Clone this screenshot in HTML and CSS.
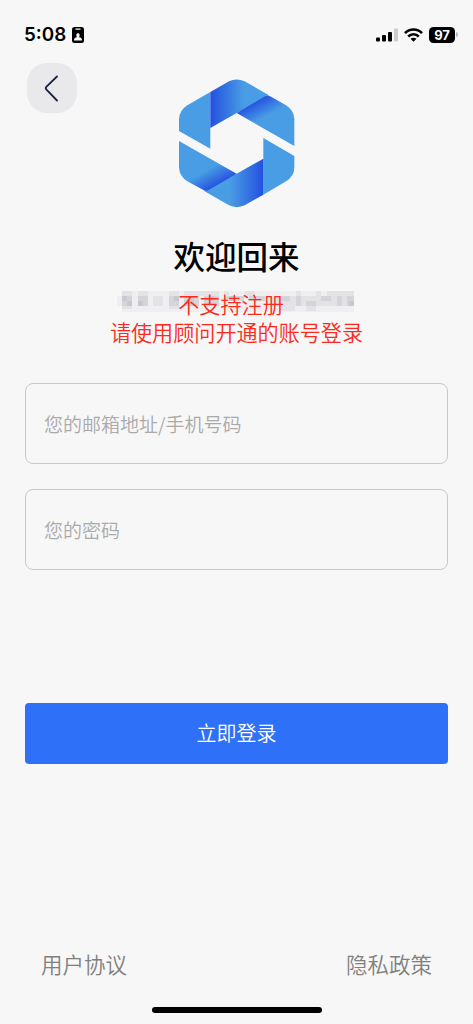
FILE: index.html
```html
<!DOCTYPE html>
<html lang="zh-CN">
<head>
<meta charset="utf-8">
<meta name="viewport" content="width=device-width">
<title>登录</title>
<link rel="stylesheet" href="styles.css">
</head>
<body>
<main class="screen">
  <header class="status">
    <div class="clock"><span>5:08</span>
      <svg class="badge" width="12" height="16" viewBox="0 0 12 16"><rect width="12" height="16" rx="2.5"/><path fill="#f7f7f7" d="M3.5 1.500h5v1.200h-5zM2 13.500c0-2.200 1.400-3 2.800-3.200V9.600C4 9 4 6.300 6 6.300s2 2.700 1.200 3.300v.7c1.400.2 2.800 1 2.800 3.200z"/></svg>
    </div>
    <div class="indicators">
      <svg width="22" height="14" viewBox="0 0 22 14"><rect x="0" y="9.500" width="4" height="4" rx="1"/><rect x="6" y="7" width="4" height="6.500" rx="1"/><rect x="12" y="4" width="4" height="9.500" rx="1"/><rect x="18" y="0.500" width="4" height="13" rx="1" fill="#ccc"/></svg>
      <svg width="19" height="14" viewBox="0 0 19 14"><g fill="none" stroke="#000" stroke-width="2.600"><path d="M1 5.200C5.700.300 13.300.300 18 5.200"/><path d="M4.200 8.500c3-3.100 7.600-3.100 10.600 0"/></g><path d="M6.500 10.800c1.700-1.500 4.300-1.500 6 0l-3 3z"/></svg>
      <div class="battery"><span>97</span></div>
    </div>
  </header>
  <button class="back" aria-label="返回"><svg width="50" height="50" viewBox="0 0 50 50"><path d="M30 13.500 19.500 23.700Q18 25.200 19.500 26.700L30 37.500" fill="none" stroke="#1b2138" stroke-width="1.800" stroke-linecap="round"/></svg></button>
  <svg class="logo" width="116" height="129" viewBox="42 28 348 387">
    <defs>
      <linearGradient id="top" gradientUnits="userSpaceOnUse" x1="136" y1="0" x2="236" y2="0"><stop stop-color="#2450e0"/><stop offset="1" stop-color="#489de4"/></linearGradient>
      <linearGradient id="right" gradientUnits="userSpaceOnUse" x1="262" y1="98" x2="290" y2="148"><stop stop-color="#2450e0"/><stop offset="1" stop-color="#489de4"/></linearGradient>
      <linearGradient id="bottom" gradientUnits="userSpaceOnUse" x1="295" y1="0" x2="195" y2="0"><stop stop-color="#2450e0"/><stop offset="1" stop-color="#489de4"/></linearGradient>
      <linearGradient id="left" gradientUnits="userSpaceOnUse" x1="168" y1="343" x2="140" y2="293"><stop stop-color="#2450e0"/><stop offset="1" stop-color="#489de4"/></linearGradient>
    </defs>
    <path fill="#489de4" d="M136 67V237L42 184V149Q43 122 67 107z"/>
    <path fill="url(#top)" d="M136 67 192 35Q215 24 239 35L312 77 215 130 136 175z"/>
    <path fill="url(#right)" d="M215 130 298 81Q307 76 318 81L363 107Q387 122 388 149V229z"/>
    <path fill="#489de4" d="M295 375V205L388 259V293Q388 320 363 335z"/>
    <path fill="url(#bottom)" d="M295 375 239 407Q215 418 192 407L116 363 215 312 295 267z"/>
    <path fill="url(#left)" d="M215 312 132 360Q124 365 114 360L67 335Q43 320 42 293V214z"/>
  </svg>
  <h1>欢迎回来</h1>
  <div class="notice">
    <svg class="mosaic" width="240" height="21" viewBox="0 0 240 21" shape-rendering="crispEdges">
      <path fill="#efeff1" d="M0 5h5v10H0zM5 0h232v21H5z"/>
      <path fill="#e3e3e6" d="M5 0h10v5H5zM21 0h10v5H21zM36 5h5v10h-5zM41 5h5v10h-5zM52 0h10v5H52zM67 0h20v5H67zM87 0h15v5H87zM107 0h5v5h-5zM128 0h10v5h-10zM153 5h10v10h-10zM163 5h74v10h-74zM179 0h5v5h-5zM199 0h5v5h-5zM210 0h27v5h-27zM5 15h10v3H5zM52 15h10v3H52zM163 15h15v5h-15zM189 15h10v5h-10z"/>
      <path fill="#d4d4d9" d="M5 5h10v10H5zM21 5h10v10H21zM52 5h10v10H52zM67 5h15v10H67zM87 5h15v10H87zM107 5h20v5h-20zM132 5h16v5h-16zM163 5h10v5h-10zM179 5h5v10h-5zM189 10h10v5h-10zM204 5h10v5h-10zM220 5h5v10h-5zM230 5h7v10h-7z"/>
      <path fill="#c8c8ce" d="M5 5h5v5H5zM10 10h5v5h-5zM21 10h5v5h-5zM57 5h5v5h-5zM72 5h5v10h-5zM92 5h5v5h-5zM112 5h5v5h-5zM232 10h5v5h-5z"/>
    </svg>
    <p class="lead">不支持注册</p>
    <p>请使用顾问开通的账号登录</p>
  </div>
  <form class="form">
    <input type="text" placeholder="您的邮箱地址/手机号码">
    <input type="password" placeholder="您的密码">
    <button class="submit" type="button">立即登录</button>
  </form>
  <footer><a>用户协议</a><a>隐私政策</a></footer>
  <div class="home"></div>
</main>
</body>
</html>
```
FILE: styles.css
```css
* { box-sizing: border-box; }
body { margin: 0; background: #f7f7f7; font-family: "Noto Sans CJK SC", sans-serif; }
.screen { width: 473px; height: 1024px; display: flex; flex-direction: column; align-items: center; overflow: hidden; }
.status { width: 100%; height: 63px; padding: 24px 15px 0 24px; display: flex; justify-content: space-between; align-items: flex-start; }
.clock { display: flex; align-items: center; gap: 6px; height: 21px; font: 600 18.800px/21px Inter, sans-serif; }
.indicators { display: flex; align-items: center; gap: 7px; height: 21px; }
.indicators svg:nth-child(2) { margin-left: -1px; }
.battery { width: 26px; height: 16px; border-radius: 4.500px; background: #000; color: #fff; font: 700 13px/16px Inter, sans-serif; text-align: center; position: relative; margin-left: -1px; margin-right: 3px; }
.battery::after { content: ""; position: absolute; left: 27px; top: 5px; width: 2px; height: 5px; border-radius: 0 2px 2px 0; background: #bbb; }
.back { align-self: flex-start; flex: none; margin-left: 27px; width: 50px; height: 50px; padding: 0; border: 0; border-radius: 20px; background: #e9e9eb; }
.back svg { display: block; }
.logo { flex: none; margin-top: -34px; }
h1 { margin: 24px 0 0; font-size: 31.500px; line-height: 46px; font-weight: 500; }
.notice { position: relative; width: 252px; margin-top: 12px; text-align: center; }
.notice p { position: relative; margin: 0 -4px; color: #fa2a1c; font-size: 21.100px; line-height: 28px; font-weight: 350; white-space: nowrap; }
.notice .lead { padding-right: 11px; }
.mosaic { position: absolute; left: 6px; top: 1px; }
.form { width: 423px; margin-top: 37px; display: flex; flex-direction: column; }
.form input { height: 81px; margin: 0 0 25px; padding: 0 18px 1px; border: 1px solid #c8c8d0; border-radius: 8px; background: transparent; font: 350 19px "Noto Sans CJK SC", sans-serif; outline: 0; }
.form input::placeholder { color: #aaa; opacity: 1; }
.submit { height: 61px; margin-top: 108px; padding: 0 0 2px; border: 0; border-radius: 4px; background: #2f70f8; color: #fff; font: 350 20px "Noto Sans CJK SC", sans-serif; }
footer { width: 100%; padding: 0 41px; margin-top: 184px; display: flex; justify-content: space-between; color: #808080; font-size: 21.500px; line-height: 32px; font-weight: 350; }
.home { width: 170px; height: 6px; margin-top: 27px; border-radius: 3px; background: #000; }
```
